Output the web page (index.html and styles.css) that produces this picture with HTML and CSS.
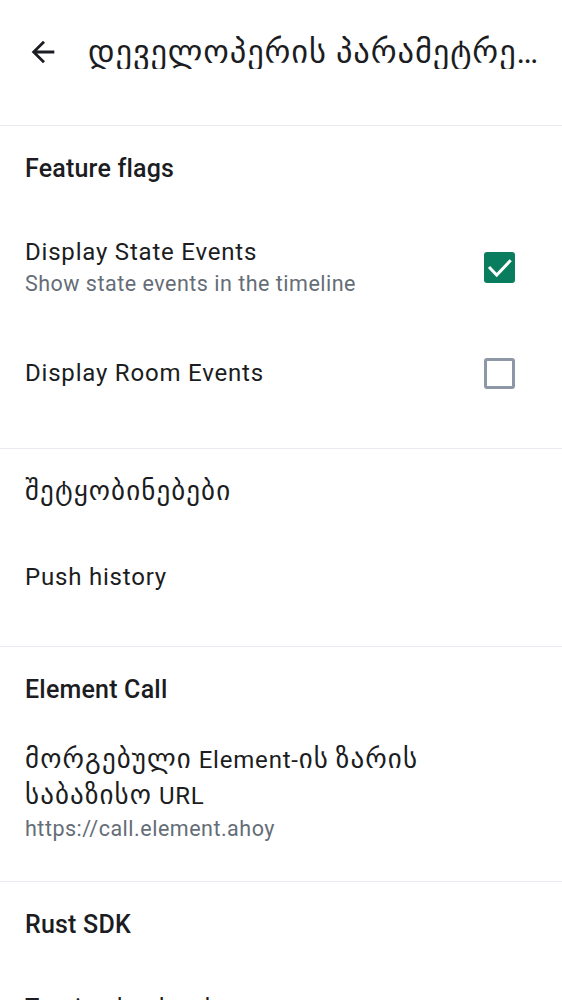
FILE: index.html
```html
<!DOCTYPE html>
<html lang="ka">
<head>
<meta charset="utf-8">
<link rel="stylesheet" href="styles.css">
</head>
<body>
<div class="screen">
  <header class="topbar">
    <svg class="back" viewBox="0 0 24 24" aria-hidden="true"><path d="M20 11H7.83l5.59-5.59L12 4l-8 8 8 8 1.41-1.41L7.83 13H20v-2z"/></svg>
    <h1 class="title">დეველოპერის პარამეტრები</h1>
  </header>

  <section class="section s1">
    <div class="header">Feature flags</div>
    <div class="item item-state">
      <div class="texts">
        <div class="label">Display State Events</div>
        <div class="sub">Show state events in the timeline</div>
      </div>
      <span class="check checked"><svg viewBox="0 0 31 31"><path d="M5 15l7.7 8L26.7 8.3"/></svg></span>
    </div>
    <div class="item item-room">
      <div class="texts">
        <div class="label">Display Room Events</div>
      </div>
      <span class="check"></span>
    </div>
  </section>

  <section class="section s2">
    <div class="item item-notif"><div class="label"><span class="ka">შეტყობინებები</span></div></div>
    <div class="item item-push"><div class="label">Push history</div></div>
  </section>

  <section class="section s3">
    <div class="header">Element Call</div>
    <div class="item item-url">
      <div class="texts">
        <div class="label multi"><span class="ka">მორგებული</span> Element-<span class="ka">ის</span> <span class="ka">ზარის</span><br><span class="ka">საბაზისო</span> URL</div>
        <div class="sub">https://call.element.ahoy</div>
      </div>
    </div>
  </section>

  <section class="section s4">
    <div class="header">Rust SDK</div>
    <div class="item item-trace"><div class="label">Tracing log level</div></div>
  </section>
</div>
</body>
</html>
```

FILE: styles.css
```css
html, body {
  margin: 0;
  padding: 0;
  background: #ffffff;
}
body {
  font-family: Roboto, "DejaVu Sans", "Noto Sans", sans-serif;
  color: #1b1d22;
  overflow: hidden;
}
.screen {
  width: 562px;
  height: 1000px;
  overflow: hidden;
}
.topbar {
  height: 125px;
  display: flex;
  align-items: flex-start;
  padding-top: 35px;
  box-sizing: border-box;
}
.back {
  width: 34px;
  height: 34px;
  margin-left: 26px;
  fill: #1b1d22;
  flex: none;
}
.title {
  margin: 0 0 0 28px;
  font-weight: 400;
  font-size: 32.5px;
  letter-spacing: 0.9px;
  line-height: 34px;
  white-space: nowrap;
  overflow: hidden;
  text-overflow: ellipsis;
  min-width: 0;
  padding-right: 14px;
}
.section {
  border-top: 1px solid #e8ebef;
  padding: 0 25px;
}
.header {
  height: 84px;
  display: flex;
  align-items: center;
  font-weight: 500;
  font-size: 25px;
  letter-spacing: 0.2px;
}
.item {
  display: flex;
  align-items: center;
  justify-content: space-between;
}
.texts { display: flex; flex-direction: column; }
.label {
  font-size: 24px;
  line-height: 33px;
  letter-spacing: 0.8px;
}
.label.multi { line-height: 35px; }
.ka {
  font-size: 27px;
  letter-spacing: 1.1px;
}
.sub {
  font-size: 21.5px;
  line-height: 30px;
  color: #656d77;
  letter-spacing: 0.5px;
}
.item-state { height: 114px; }
.item-room { height: 98px; }
.s1 { padding-bottom: 26px; }
.item-notif { height: 86px; }
.item-push { height: 84px; }
.s2 { padding-bottom: 27px; }
.item-url { height: 124px; }
.s3 { padding-bottom: 26px; }
.item-trace { height: 82px; }
.check {
  width: 31px;
  height: 31px;
  box-sizing: border-box;
  border: 3px solid #8d97a5;
  border-radius: 3px;
  margin-right: 22px;
  display: flex;
  align-items: center;
  justify-content: center;
  flex: none;
  position: relative;
}
.check.checked {
  background: #0b7d5f;
  border-color: #0b7d5f;
}
.check svg {
  position: absolute;
  left: -3px;
  top: -3px;
  width: 31px;
  height: 31px;
  fill: none;
  stroke: #ffffff;
  stroke-width: 3;
}
```
